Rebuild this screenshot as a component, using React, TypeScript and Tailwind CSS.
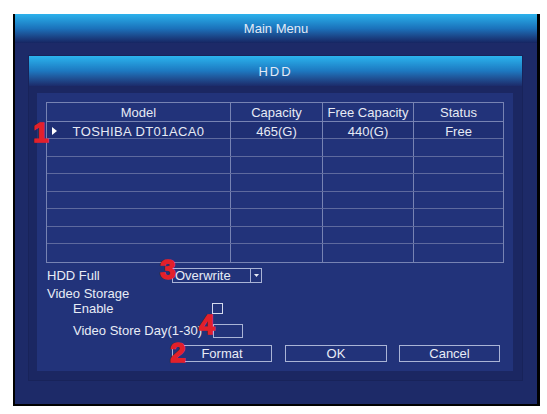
import React from 'react'

const rows = [
  { model: 'TOSHIBA DT01ACA0', capacity: '465(G)', free: '440(G)', status: 'Free', selected: true },
  { model: '', capacity: '', free: '', status: '' },
  { model: '', capacity: '', free: '', status: '' },
  { model: '', capacity: '', free: '', status: '' },
  { model: '', capacity: '', free: '', status: '' },
  { model: '', capacity: '', free: '', status: '' },
  { model: '', capacity: '', free: '', status: '' },
  { model: '', capacity: '', free: '', status: '' },
]

function Marker({ n, className }: { n: string; className: string }) {
  return (
    <span
      className={`absolute text-[28px] font-bold leading-none text-[#e3202a] [-webkit-text-stroke:1.5px_#e3202a] ${className}`}
    >
      {n}
    </span>
  )
}

function Button({ label, className }: { label: string; className: string }) {
  return (
    <div className={`h-[17px] border border-[#aab4d6] flex items-center justify-center text-[13px] text-[#e8ecf6] ${className}`}>
      {label}
    </div>
  )
}

export default function App() {
  return (
    <div className="relative w-[547px] h-[414px] bg-white pt-[14px] pl-[13px] font-['Liberation_Sans',Arial,sans-serif] overflow-hidden">
      {/* Outer frame */}
      <div className="w-[527px] h-[392px] border-l-2 border-r-[3px] border-b-2 border-black bg-[#1d2a68] flex flex-col">
        <div className="h-[29px] bg-linear-to-b from-[#2cb2ec] via-[#1b72bb] to-[#162562] flex items-center justify-center text-[13px] text-[#e2eaf6]">
          Main Menu
        </div>

        {/* HDD panel */}
        <div className="mt-[12px] ml-[13px] w-[495px] h-[326px] bg-[#1b2762] border border-[#18235a] flex flex-col">
          <div className="h-[30px] bg-linear-to-b from-[#2cb4ee] via-[#1d78c0] to-[#1b2b6a] flex items-center justify-center pt-[2px] text-[13px] tracking-[2px] text-[#e2eaf6]">
            HDD
          </div>

          <div className="mt-[7px] ml-[8px] w-[476px] h-[278px] bg-[#22337a] pt-[9px] pl-[9px]">
            {/* Disk table */}
            <div className="w-[458px] border border-[#7783b3] text-[13px] text-[#e6eaf4]">
              <div className="grid grid-cols-[183px_92px_91px_90px] h-[19px] border-b border-[#7783b3]">
                <div className="flex items-center justify-center">Model</div>
                <div className="flex items-center justify-center border-l border-[#7783b3]">Capacity</div>
                <div className="flex items-center justify-center border-l border-[#7783b3]">Free Capacity</div>
                <div className="flex items-center justify-center border-l border-[#7783b3]">Status</div>
              </div>
              {rows.map((r, i) => (
                <div
                  key={i}
                  className={`grid grid-cols-[183px_92px_91px_90px] ${i % 2 === 1 ? 'h-[18px]' : 'h-[17px]'} ${i < rows.length - 1 ? 'border-b border-[#5e6a9e]' : ''} ${r.selected ? 'bg-[#1f2f74]' : ''}`}
                >
                  <div className="relative flex items-center justify-center tracking-[0.4px]">
                    {r.selected && (
                      <svg className="absolute left-[5px] top-[5px]" width="5" height="8" viewBox="0 0 5 8">
                        <path d="M0 0 L5 4 L0 8 Z" fill="#ffffff" />
                      </svg>
                    )}
                    {r.model}
                  </div>
                  <div className="flex items-center justify-center border-l border-[#7783b3]">{r.capacity}</div>
                  <div className="flex items-center justify-center border-l border-[#7783b3]">{r.free}</div>
                  <div className="flex items-center justify-center border-l border-[#7783b3]">{r.status}</div>
                </div>
              ))}
            </div>

            {/* Settings */}
            <div className="ml-[1px] text-[13px] text-[#e8ecf6]">
              <div className="mt-[5px] h-[15px] flex items-center">
                <span className="w-[125px]">HDD Full</span>
                <div className="w-[90px] h-[15px] border border-[#aab4d6] flex">
                  <span className="flex-1 pl-[2px] flex items-center leading-none">Overwrite</span>
                  <span className="w-[11px] border-l border-[#aab4d6] flex items-center justify-center">
                    <svg width="5" height="3" viewBox="0 0 5 3">
                      <path d="M0 0 H5 L2.5 3 Z" fill="#e8ecf6" />
                    </svg>
                  </span>
                </div>
              </div>
              <div className="mt-[3px] h-[16px] flex items-center">Video Storage</div>
              <div className="h-[13px] flex items-center">
                <span className="w-[165px] pl-[26px]">Enable</span>
                <span className="w-[11px] h-[11px] border border-[#d4daee]" />
              </div>
              <div className="mt-[9px] h-[14px] flex items-center">
                <span className="w-[166px] pl-[26px]">Video Store Day(1-30)</span>
                <span className="w-[30px] h-[14px] border border-[#aab4d6]" />
              </div>
              <div className="mt-[7px] flex">
                <Button label="Format" className="ml-[125px] w-[100px]" />
                <Button label="OK" className="ml-[13px] w-[102px]" />
                <Button label="Cancel" className="ml-[12px] w-[101px]" />
              </div>
            </div>
          </div>
        </div>
      </div>

      {/* Red annotation numbers */}
      <Marker n="1" className="left-[33px] top-[119px]" />
      <Marker n="3" className="left-[160px] top-[256px]" />
      <Marker n="4" className="left-[199px] top-[311px]" />
      <Marker n="2" className="left-[170px] top-[339px]" />
    </div>
  )
}
